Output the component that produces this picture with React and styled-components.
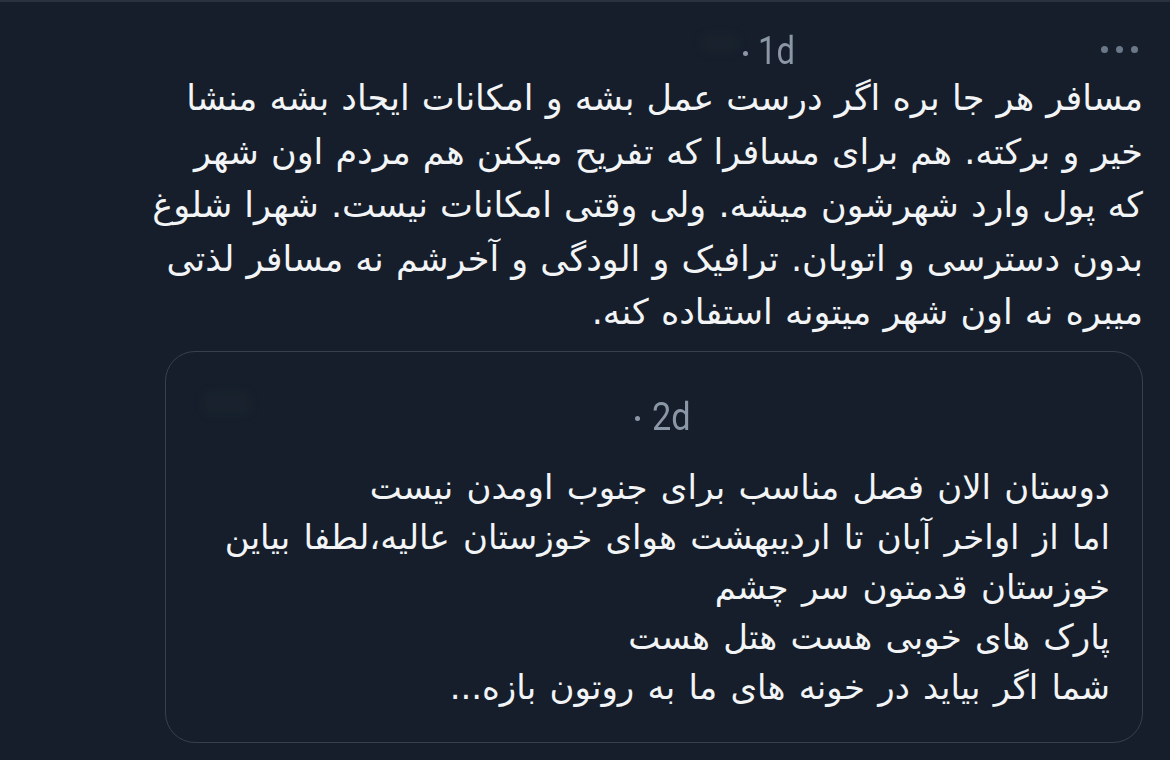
import React from "react";
import styled, { createGlobalStyle } from "styled-components";

const Global = createGlobalStyle`
  html, body { margin: 0; padding: 0; background: #151e2a; }
  body { width: 1170px; height: 760px; overflow: hidden; }
`;

const Page = styled.div`
  width: 1170px;
  height: 760px;
  box-sizing: border-box;
  background: #151e2a;
  border-top: 2px solid #29323e;
  padding: 0 27px 0 165px;
  display: flex;
  flex-direction: column;
`;

const Header = styled.div`
  height: 102px;
  display: flex;
  align-items: flex-start;
  padding-top: 30px;
  box-sizing: border-box;
  position: relative;
`;

const Meta = styled.div`
  font-family: Roboto, "Liberation Sans", sans-serif;
  color: #8b97a6;
  font-size: 39px;
  display: flex;
  align-items: center;
  gap: ${(p) => p.$gap}px;
  margin-left: ${(p) => p.$left}px;
  line-height: 1;
  height: 39px;
`;

const Stamp = styled.span`
  display: inline-block;
  transform: scaleX(${(p) => p.$sx});
  transform-origin: left center;
`;

const Dot = styled.span`
  width: 5px;
  height: 5px;
  border-radius: 50%;
  background: #8b97a6;
  margin-top: 3px;
`;

const More = styled.div`
  position: absolute;
  right: 5px;
  top: 44px;
  display: flex;
  gap: 8px;
`;

const MoreDot = styled.span`
  width: 7px;
  height: 7px;
  border-radius: 50%;
  background: #6b7888;
`;

const Blur = styled.span`
  position: absolute;
  left: ${(p) => p.$x}px;
  top: ${(p) => p.$y}px;
  width: ${(p) => p.$w}px;
  height: ${(p) => p.$h}px;
  border-radius: 8px;
  background: rgba(120, 135, 150, 0.035);
  filter: blur(5px);
`;

const Body = styled.div`
  direction: rtl;
  font-family: "DejaVu Sans", sans-serif;
  color: #f2f4f6;
  font-size: ${(p) => p.$size}px;
  line-height: ${(p) => p.$lh}px;
  word-spacing: ${(p) => p.$ws || 0}px;
  white-space: nowrap;
  margin-top: ${(p) => p.$top || 0}px;
`;

const Line = styled.div``;

const Card = styled.div`
  margin-top: 11px;
  height: 392px;
  box-sizing: border-box;
  border: 1.5px solid #37414d;
  border-radius: 30px;
  display: flex;
  flex-direction: column;
  padding: 0 32px 0 34px;
  position: relative;
`;

const CardHeader = styled.div`
  height: 110px;
  display: flex;
  align-items: flex-start;
  padding-top: 46px;
  box-sizing: border-box;
`;

const main = [
  "مسافر هر جا بره اگر درست عمل بشه و امکانات ایجاد بشه منشا",
  "خیر و برکته. هم برای مسافرا که تفریح میکنن هم مردم اون شهر",
  "که پول وارد شهرشون میشه. ولی وقتی امکانات نیست. شهرا شلوغ",
  "بدون دسترسی و اتوبان. ترافیک و الودگی و آخرشم نه مسافر لذتی",
  "میبره نه اون شهر میتونه استفاده کنه.",
];

const quote = [
  "دوستان الان فصل مناسب برای جنوب اومدن نیست",
  "اما از اواخر آبان تا اردیبهشت هوای خوزستان عالیه،لطفا بیاین",
  "خوزستان قدمتون سر چشم",
  "پارک های خوبی هست هتل هست",
  "شما اگر بیاید در خونه های ما به روتون بازه...",
];

export default function App() {
  return (
    <>
      <Global />
      <Page>
        <Header>
          <Blur $x={535} $y={30} $w={40} $h={22} />
          <Meta $left={578} $gap={10}>
            <Dot />
            <Stamp $sx={0.84}>1d</Stamp>
          </Meta>
          <More>
            <MoreDot />
            <MoreDot />
            <MoreDot />
          </More>
        </Header>
        <Body $size={35} $lh={53.5} $top={-32} $ws={1}>
          {main.map((t, i) => (
            <Line key={i}>{t}</Line>
          ))}
        </Body>
        <Card>
          <Blur $x={36} $y={38} $w={50} $h={26} />
          <CardHeader>
            <Meta $left={435} $gap={12}>
              <Dot />
              <Stamp $sx={0.88}>2d</Stamp>
            </Meta>
          </CardHeader>
          <Body $size={34} $lh={50} $ws={2.5}>
            {quote.map((t, i) => (
              <Line key={i}>{t}</Line>
            ))}
          </Body>
        </Card>
      </Page>
    </>
  );
}
